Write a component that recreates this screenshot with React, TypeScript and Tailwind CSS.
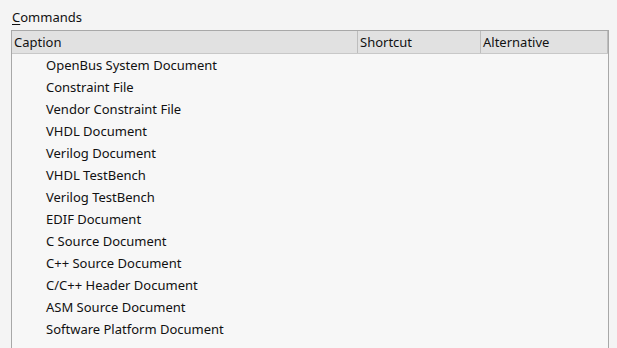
import React from "react";

const items = [
  "OpenBus System Document",
  "Constraint File",
  "Vendor Constraint File",
  "VHDL Document",
  "Verilog Document",
  "VHDL TestBench",
  "Verilog TestBench",
  "EDIF Document",
  "C Source Document",
  "C++ Source Document",
  "C/C++ Header Document",
  "ASM Source Document",
  "Software Platform Document",
];

export default function App() {
  return (
    <div
      className="w-[617px] h-[348px] overflow-hidden bg-[#f4f4f4] text-[13px] text-[#111]"
      style={{ fontFamily: '"Noto Sans", "Open Sans", sans-serif' }}
    >
      <div className="pl-[12px] pt-[8px] h-[30px] leading-[18px]">
        <span className="underline underline-offset-2">C</span>ommands
      </div>
      <div className="ml-[11px] w-[598px] h-[330px] border border-[#a8a8a8] border-b-0 bg-[#f7f7f7]">
        <div className="flex h-[23px] bg-[#e1e1e1] border-b border-[#c8c8c8] items-center">
          <div className="w-[345px] pl-[2px] pt-[1px]">Caption</div>
          <div className="w-[123px] h-full flex items-center border-l border-[#bdbdbd] pl-[2px] pt-[1px]">Shortcut</div>
          <div className="flex-1 h-full flex items-center border-l border-r border-[#bdbdbd] pl-[2px] pt-[1px]">Alternative</div>
        </div>
        <div className="flex flex-col pt-[1px]">
          {items.map((t) => (
            <div key={t} className="h-[22px] flex items-center pl-[34px]">
              {t}
            </div>
          ))}
        </div>
      </div>
    </div>
  );
}
